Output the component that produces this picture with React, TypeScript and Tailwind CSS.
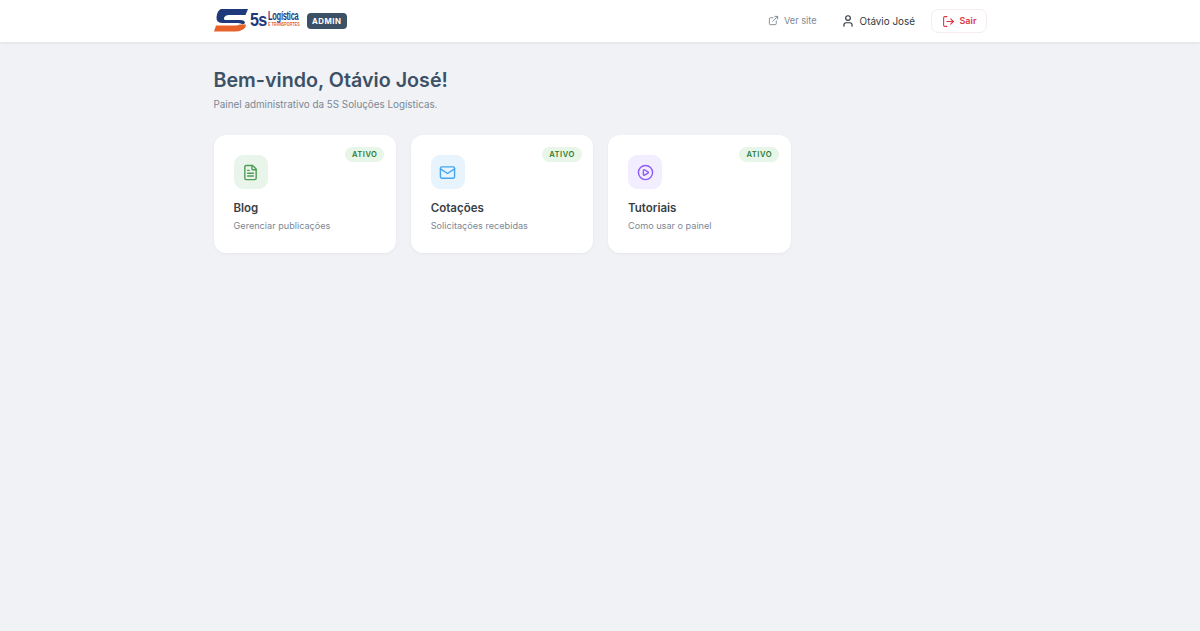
import { ExternalLink, FileText, LogOut, Mail, CirclePlay, User } from 'lucide-react';

const cards = [
  { title: 'Blog', text: 'Gerenciar publicações', Icon: FileText, box: 'bg-[#e9f5ea]', color: 'text-[#4f9d54]' },
  { title: 'Cotações', text: 'Solicitações recebidas', Icon: Mail, box: 'bg-[#e8f4fd]', color: 'text-[#42a5f5]' },
  { title: 'Tutoriais', text: 'Como usar o painel', Icon: CirclePlay, box: 'bg-[#f3eeff]', color: 'text-[#8b5cf6]' },
];

function Logo() {
  return (
    <div className="mb-[3px] flex items-center">
      <svg width="34" height="24" viewBox="0 0 34 24" className="shrink-0">
        <path d="M7 1 H34 L31.5 7 H15 Q11 7 10 10 Q9.5 12 12 12 H26 Q31 12 31 15 L29 16.5 Q27 15 24 15 H9 Q2 15 2.5 9 Q3.5 2 7 1 Z" fill="#1f3a7a" />
        <path d="M2 17.5 H22 Q24.5 17.5 25.5 16.5 H32 Q32 20 28 22 Q25 23.5 21 23.5 H0 Z" fill="#e8622c" />
      </svg>
      <div className="ml-[2px] w-[18px] origin-left scale-x-[0.85] text-[19px] leading-none font-bold tracking-[-1px] text-[#1f3a7a] font-['Liberation_Sans',sans-serif]">5s</div>
      <div className="flex w-[31px] flex-col font-['Liberation_Sans',sans-serif]">
        <span className="origin-left scale-x-[0.62] text-[12px] leading-[10px] font-bold tracking-[-0.4px] whitespace-nowrap text-[#1f3a7a]">Logística</span>
        <span className="origin-left scale-x-[0.62] text-[6px] leading-[7px] font-bold whitespace-nowrap text-[#e8622c]">E TRANSPORTES</span>
      </div>
    </div>
  );
}

export default function App() {
  return (
    <div className="min-h-[631px] bg-[#f0f2f5] font-['Inter',sans-serif]">
      {/* Header */}
      <header className="h-[42px] bg-white shadow-[0_1px_3px_rgba(0,0,0,0.08)]">
        <div className="mx-auto flex h-full w-[774px] items-center justify-between">
          <div className="flex items-center gap-[8px] pl-[0.5px]">
            <Logo />
            <span className="rounded-[4px] bg-[#3d5166] px-[5.5px] py-[2px] text-[7.8px] leading-[12px] font-bold tracking-[0.5px] text-white">ADMIN</span>
          </div>
          <div className="flex items-center">
            <a className="flex items-center gap-[5px] text-[9.2px] text-[#7b8794]">
              <ExternalLink className="h-[11px] w-[11px]" strokeWidth={2} />
              <span>Ver site</span>
            </a>
            <div className="ml-[24px] flex items-center gap-[5px] text-[9.9px] text-[#333a42]">
              <User className="h-[14px] w-[14px]" strokeWidth={2} />
              <span>Otávio José</span>
            </div>
            <button className="ml-[16px] flex h-[24px] w-[56px] items-center justify-center gap-[5px] rounded-[7px] border border-[#f5ecee] bg-white text-[9px] font-semibold text-[#dc3545]">
              <LogOut className="h-[13px] w-[13px]" strokeWidth={2} />
              <span>Sair</span>
            </button>
          </div>
        </div>
      </header>

      <main className="mx-auto w-[774px] pt-[25px] pl-[0.5px]">
        <h1 className="text-[19.7px] leading-[26px] font-semibold text-[#3d5166]">Bem-vindo, Otávio José!</h1>
        <p className="mt-[4px] text-[9.85px] leading-[14px] text-[#7b8794]">Painel administrativo da 5S Soluções Logísticas.</p>

        <div className="mt-[24px] flex w-[577px] gap-[14.8px]">
          {cards.map(({ title, text, Icon, box, color }) => (
            <div key={title} className="relative h-[117.5px] flex-1 rounded-[12px] bg-white p-[20px] shadow-[0_1px_3px_rgba(0,0,0,0.05)]">
              <span className="absolute top-[11.5px] right-[11.5px] rounded-full bg-[#e8f5e9] px-[7px] py-[2px] text-[7.6px] leading-[11px] font-semibold tracking-[0.5px] text-[#2e7d32]">ATIVO</span>
              <div className={`flex h-[34px] w-[34px] items-center justify-center rounded-[9px] ${box}`}>
                <Icon className={`h-[17px] w-[17px] ${color}`} strokeWidth={2} />
              </div>
              <h3 className="mt-[11px] text-[11.5px] leading-[16px] font-semibold text-[#3a3f45]">{title}</h3>
              <p className="mt-[3px] text-[9.15px] leading-[14px] text-[#7b8794]">{text}</p>
            </div>
          ))}
        </div>
      </main>
    </div>
  );
}
